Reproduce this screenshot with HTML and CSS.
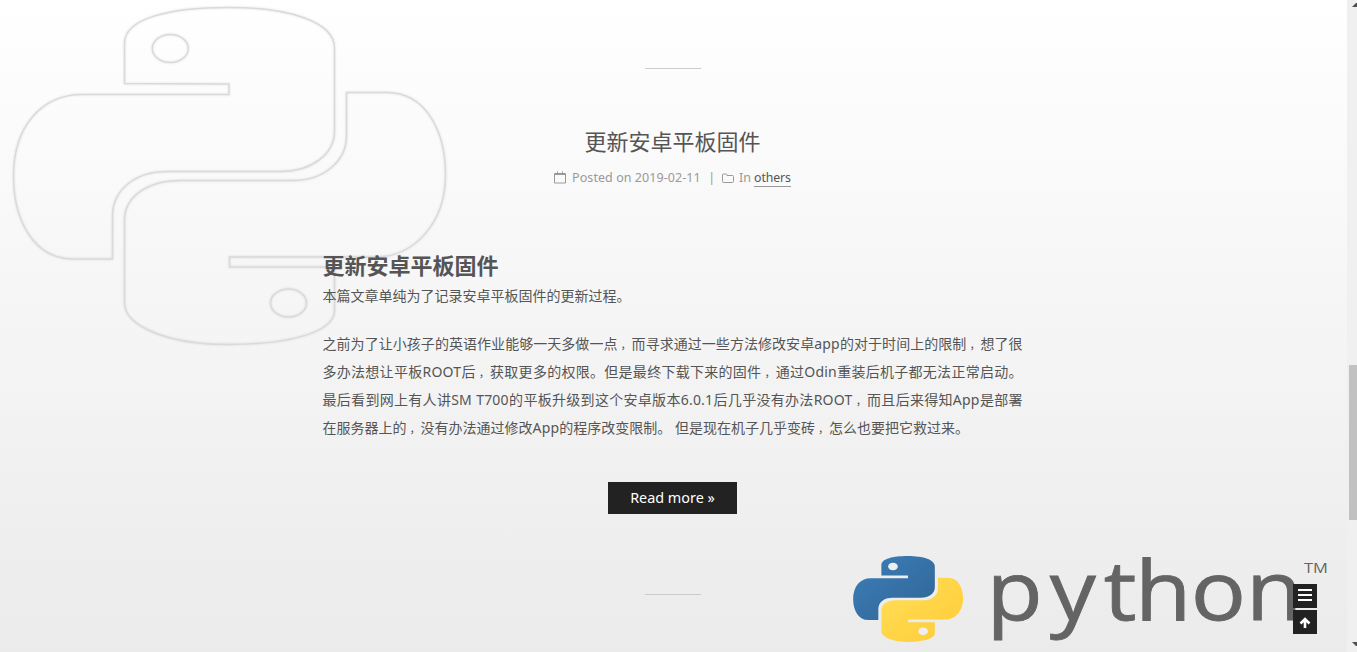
FILE: index.html
```html
<!DOCTYPE html>
<html lang="zh-CN">
<head>
<meta charset="utf-8">
<title>更新安卓平板固件</title>
<link rel="stylesheet" href="styles.css">
</head>
<body>
<div class="window">
  <div class="page">
    <svg class="backdrop" viewBox="0 0 1347 652" aria-hidden="true">
      <defs>
        <linearGradient id="blue" x1="0" y1="0" x2="1" y2="1"><stop offset="0" stop-color="#3b7fb9"/><stop offset="1" stop-color="#316494"/></linearGradient>
        <linearGradient id="yellow" x1="0" y1="0" x2="1" y2="1"><stop offset="0" stop-color="#ffe05a"/><stop offset="1" stop-color="#ffca35"/></linearGradient>
        <path id="snake-top" d="M124.500 83.500V43C125 18 170 7.500 228 7.500C290 7.500 334.500 22 334.500 48V131C334.500 154 312 171.500 280 171.500H167C135 171.500 112.500 190 112.500 216V259H73C35 259 13.500 222 13.500 176C13.500 126 42 94.500 82 94.500H229V84Z"/>
        <path id="snake-bottom" d="M346.500 92.500H387C425 92.500 445.500 130 445.500 175C445.500 222 415 257 375 257H229.500V267H334.500V312C332 333 288 344.500 228 344.500C165 344.500 124.500 325 124.500 303V220C124.500 197 147 180.500 181 180.500H293C325 180.500 346.500 160 346.500 136Z"/>
      </defs>
      <g class="outline">
        <use href="#snake-top"/>
        <use href="#snake-bottom"/>
        <ellipse cx="170.300" cy="48.500" rx="18" ry="14"/>
        <ellipse cx="288.500" cy="303" rx="18" ry="14"/>
      </g>
      <g transform="translate(849.700 554.200) scale(.2545)">
        <use href="#snake-top" fill="url(#blue)"/>
        <use href="#snake-bottom" fill="url(#yellow)"/>
        <ellipse class="eye" cx="170" cy="48.500" rx="19" ry="15"/>
        <ellipse class="eye" cx="288.500" cy="303" rx="19" ry="15"/>
      </g>
      <text class="wordmark" transform="translate(986 620) scale(1.150 1.040)" x="0.500 55.500 102.500 129.500 178 226" y="0">python</text>
      <text class="tm" x="1304" y="573" textLength="24" lengthAdjust="spacingAndGlyphs">TM</text>
    </svg>

    <main class="content">
      <div class="rule"></div>
      <article class="post">
        <h1 class="post-title">更新安卓平板固件</h1>
        <div class="post-meta">
          <svg class="calendar" viewBox="0 0 12 13"><path d="M.5 2.500h11v9.500h-11zM.5 3.500h11M3.500.5v2.500M8.500.5v2.500"/></svg>
          <span class="posted">Posted on 2019-02-11</span>
          <span class="divider">|</span>
          <svg class="folder" viewBox="0 0 13 11"><path d="M.5 2q0-1 1-1h2.500q1 0 1 1v.5h5.500q1 0 1 1v5q0 1-1 1h-9q-1 0-1-1z"/></svg>
          <span class="in">In</span>
          <a class="category">others</a>
        </div>
        <div class="post-body">
          <h2 class="heading">更新安卓平板固件</h2>
          <p class="intro">本篇文章单纯为了记录安卓平板固件的更新过程。</p>
          <p class="text">
            <span class="line full">之前为了让小孩子的英语作业能够一天多做一点<i>，</i>而寻求通过一些方法修改安卓<b>app</b>的对于时间上的限制<i>，</i>想了很</span>
            <span class="line full">多办法想让平板<b>ROOT</b>后<i>，</i>获取更多的权限。但是最终下载下来的固件<i>，</i>通过<b>Odin</b>重装后机子都无法正常启动。</span>
            <span class="line full">最后看到网上有人讲<b>SM T700</b>的平板升级到这个安卓版本<b>6.0.1</b>后几乎没有办法<b>ROOT</b><i>，</i>而且后来得知<b>App</b>是部署</span>
            <span class="line">在服务器上的<i>，</i>没有办法通过修改<b>App</b>的程序改变限制。 但是现在机子几乎变砖<i>，</i>怎么也要把它救过来。</span>
          </p>
        </div>
        <a class="read-more">Read more »</a>
      </article>
      <div class="rule"></div>
    </main>

    <div class="tools">
      <div class="tool"><svg viewBox="0 0 24 24"><path class="bars" d="M5 6h14M5 11h14M5 16h14"/></svg></div>
      <div class="tool"><svg viewBox="0 0 24 24"><path class="arrow" d="M12 18v-8M7.500 13.500L12 9l4.500 4.500"/></svg></div>
    </div>
  </div>
  <div class="scrollbar">
    <svg class="cap" viewBox="0 0 10 10"><path d="M5 7L9 3H10V7Z"/></svg>
    <div class="thumb"></div>
    <svg class="cap" viewBox="0 0 10 10"><path d="M5 0H10V4H9Z"/></svg>
  </div>
</div>
</body>
</html>
```
FILE: styles.css
```css
* { box-sizing: border-box; }
body {
  margin: 0;
  overflow: hidden;
  color: #555;
  font-family: "Noto Sans", "Noto Sans CJK SC", sans-serif;
}
h1, h2, p { margin: 0; font-weight: 400; }
.window { display: flex; height: 652px; }
.page {
  position: relative;
  flex: 1;
  background: linear-gradient(#fff, #ebebeb);
}
.backdrop { position: absolute; inset: 0; width: 1347px; height: 652px; }
.outline {
  fill: none;
  stroke: #dadada;
  stroke-width: 1.5;
  filter: drop-shadow(0 0 1px rgba(0, 0, 0, .12));
}
.eye { fill: #eee; }
.wordmark { font: 80px "Open Sans", sans-serif; fill: #646464; stroke: #646464; stroke-width: .8; }
.tm { font: 14px "Open Sans", sans-serif; fill: #646464; }

.content {
  position: relative;
  display: flex;
  flex-direction: column;
  align-items: center;
  padding: 68px 2px 0 0;
}
.rule { width: 56px; height: 1px; background: #ccc; }
.post {
  display: flex;
  flex-direction: column;
  align-items: center;
  width: 700px;
  height: 525px;
  padding-top: 54px;
}
.post-title { font-size: 22px; line-height: 36px; }
.post-meta {
  display: flex;
  align-items: center;
  height: 18px;
  margin-top: 10px;
  color: #999;
  font-size: 12.5px;
  line-height: 18px;
  white-space: nowrap;
}
.post-meta svg { fill: none; stroke: #999; }
.calendar { width: 12px; height: 13px; margin: 0 6px 2px 0; }
.folder { width: 13px; height: 11px; margin-right: 4px; }
.posted { width: 129px; letter-spacing: .06px; }
.divider { width: 21px; text-align: center; }
.in { width: 15px; }
.category {
  border-bottom: 1px solid #999;
  color: #555;
  font-size: 12.3px;
  letter-spacing: -.1px;
  line-height: 16px;
}

.post-body { width: 700px; margin-top: 63px; }
.heading { font-size: 22px; font-weight: 700; line-height: 30px; }
.intro { margin-top: 2px; font-size: 14px; line-height: 28px; }
.text { margin-top: 20px; font-size: 14px; line-height: 28px; }
.line { display: block; height: 28px; white-space: nowrap; }
.full { text-align: justify; text-align-last: justify; }
.line i { padding-left: 3px; font-size: 11px; font-style: normal; }
.line b { font-weight: 400; letter-spacing: .2px; }
.read-more {
  width: 129px;
  height: 32px;
  margin-top: 40px;
  background: #222;
  color: #fff;
  font-size: 14.4px;
  line-height: 31px;
  text-align: center;
}

.tools {
  position: absolute;
  right: 30px;
  bottom: 18px;
  display: flex;
  flex-direction: column;
  gap: 2px;
}
.tool { width: 24px; height: 24px; background: #222; }
.tool svg { display: block; }
.tool path { fill: none; stroke: #fff; }
.tool .bars { stroke-width: 2; }
.tool .arrow { stroke-width: 2.6; }

.scrollbar {
  display: flex;
  flex-direction: column;
  justify-content: space-between;
  width: 10px;
  background: #f0f0f0;
}
.cap { width: 10px; height: 10px; fill: #505050; }
.thumb { width: 8px; height: 155px; margin: 355px 0 122px 2px; background: #c1c1c1; }
```
